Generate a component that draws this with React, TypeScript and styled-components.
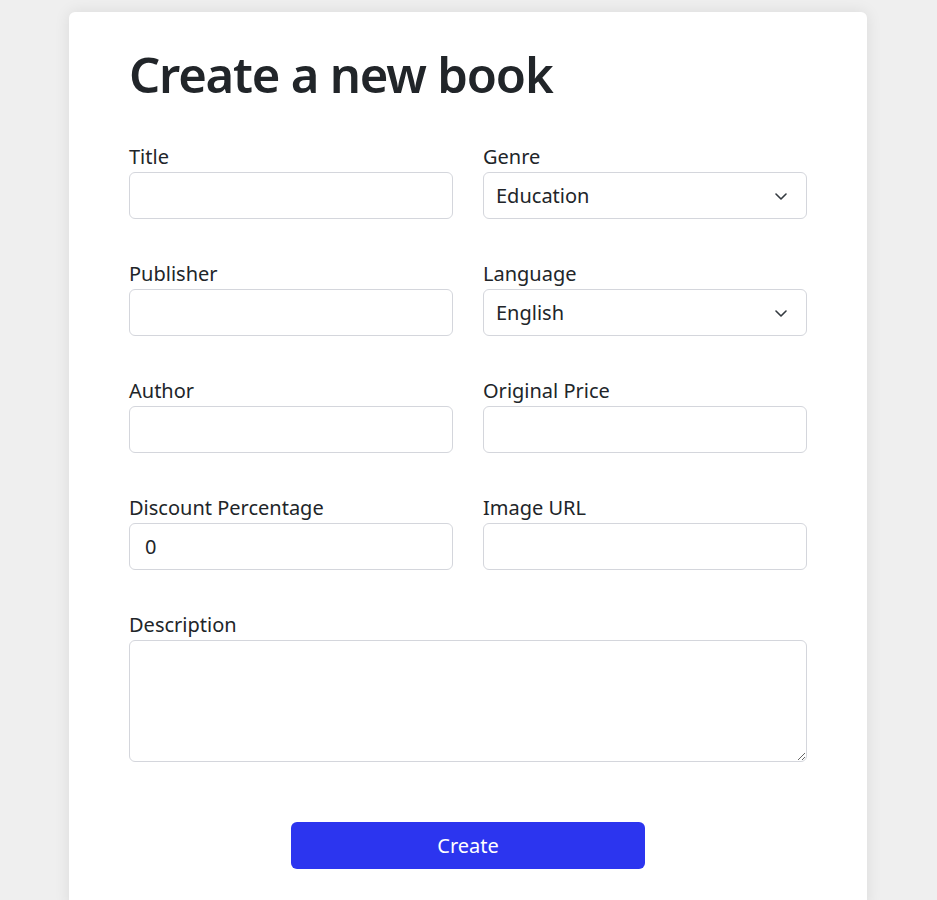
import { FC } from "react";
import styled, { createGlobalStyle } from "styled-components";

const GlobalStyle = createGlobalStyle`
  body {
    margin: 0;
    padding-right: 1px;
    background-color: #efefef;
    font-family: "Noto Sans", "Open Sans", sans-serif;
    color: #212529;
  }
`;

const StyledCard = styled.div`
  width: 798px;
  box-sizing: border-box;
  margin: 12px auto 0;
  padding: 32px 60px 40px;
  background-color: #ffffff;
  border-radius: 6px;
  box-shadow: 0 0 16px rgba(0, 0, 0, 0.09);
`;

const StyledHeading = styled.h1`
  margin: 0 0 41px;
  font-size: 49px;
  font-weight: 600;
  line-height: 60px;
  letter-spacing: -1.2px;
`;

const StyledForm = styled.form`
  display: grid;
  grid-template-columns: 1fr 1fr;
  column-gap: 30px;
  row-gap: 43px;
`;

const StyledField = styled.div<{ $wide?: boolean }>`
  display: flex;
  flex-direction: column;
  gap: 3px;
  grid-column: ${(p) => (p.$wide ? "1 / -1" : "auto")};
`;

const StyledLabel = styled.label`
  font-size: 20px;
  line-height: 24px;
`;

const fieldBase = `
  box-sizing: border-box;
  width: 100%;
  border: 1px solid #d4d6dc;
  border-radius: 6px;
  background-color: #fff;
  font-family: "Noto Sans", "Open Sans", sans-serif;
  font-size: 20px;
  color: #212529;
  padding: 0 15px;
  outline: none;
`;

const StyledInput = styled.input`
  ${fieldBase}
  height: 47px;
`;

const StyledSelectWrap = styled.div`
  position: relative;
`;

const StyledSelect = styled.select`
  ${fieldBase}
  height: 47px;
  padding: 0 40px 0 12px;
  appearance: none;
`;

const StyledChevron = styled.svg`
  position: absolute;
  right: 20px;
  top: 50%;
  width: 12px;
  height: 7px;
  margin-top: -3px;
  pointer-events: none;
`;

const StyledTextarea = styled.textarea`
  ${fieldBase}
  height: 122px;
  padding: 8px 15px;
  resize: vertical;
`;

const StyledActions = styled.div`
  display: flex;
  justify-content: center;
  margin-top: 60px;
`;

const StyledButton = styled.button`
  width: 354px;
  height: 47px;
  border: none;
  border-radius: 6px;
  background-color: #2c35ef;
  color: #ffffff;
  font-family: "Noto Sans", "Open Sans", sans-serif;
  font-size: 20px;
  cursor: pointer;
`;

interface SelectFieldProps {
  label: string;
  options: string[];
}

const SelectField: FC<SelectFieldProps> = ({ label, options }) => (
  <StyledField>
    <StyledLabel>{label}</StyledLabel>
    <StyledSelectWrap>
      <StyledSelect defaultValue={options[0]}>
        {options.map((o) => (
          <option key={o}>{o}</option>
        ))}
      </StyledSelect>
      <StyledChevron viewBox="0 0 12 7" fill="none">
        <path d="M1 1l5 5 5-5" stroke="#343a40" strokeWidth="1.6" strokeLinecap="round" strokeLinejoin="round" />
      </StyledChevron>
    </StyledSelectWrap>
  </StyledField>
);

const TextField: FC<{ label: string; value?: string }> = ({ label, value }) => (
  <StyledField>
    <StyledLabel>{label}</StyledLabel>
    <StyledInput type="text" defaultValue={value} />
  </StyledField>
);

export default function App() {
  return (
    <>
      <GlobalStyle />
      <StyledCard>
        <StyledHeading>Create a new book</StyledHeading>
        <StyledForm onSubmit={(e) => e.preventDefault()}>
          <TextField label="Title" />
          <SelectField label="Genre" options={["Education", "Fiction", "Science", "History"]} />
          <TextField label="Publisher" />
          <SelectField label="Language" options={["English", "French", "German", "Spanish"]} />
          <TextField label="Author" />
          <TextField label="Original Price" />
          <TextField label="Discount Percentage" value="0" />
          <TextField label="Image URL" />
          <StyledField $wide>
            <StyledLabel>Description</StyledLabel>
            <StyledTextarea />
          </StyledField>
        </StyledForm>
        <StyledActions>
          <StyledButton type="button">Create</StyledButton>
        </StyledActions>
      </StyledCard>
    </>
  );
}
